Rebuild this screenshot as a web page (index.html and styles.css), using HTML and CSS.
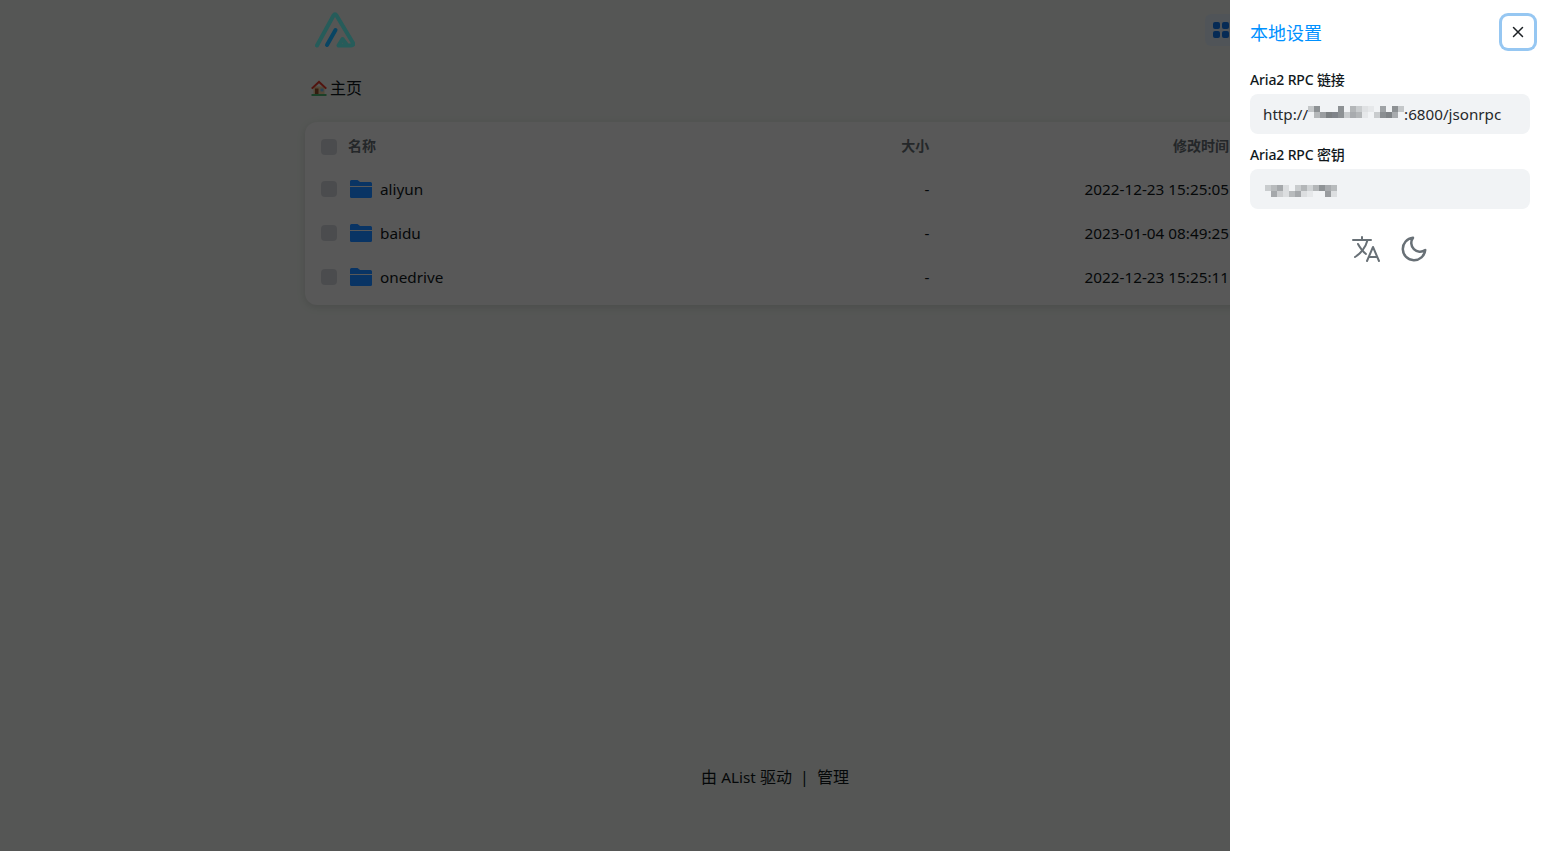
FILE: index.html
```html
<!DOCTYPE html>
<html lang="zh-CN">
<head>
    <meta charset="UTF-8">
    <title>主页 | AList</title>
    <link rel="stylesheet" href="styles.css">
</head>
<body>
    <div class="page">
        <header class="top">
            <svg class="logo raised" viewBox="0 0 40 36" width="40" height="36">
                <path d="M2 33.500 L18.500 3.500 Q20 1 21.500 3.500 L38 31 Q39 33.500 36 33.500 H23.500 L27.500 27 L32 33" fill="none" stroke="#265c5a" stroke-width="4" stroke-linecap="round" stroke-linejoin="round"/>
                <path d="M12 33 L20.500 18" fill="none" stroke="#094563" stroke-width="4" stroke-linecap="round"/>
            </svg>
            <div class="layout-btn">
                <svg class="raised" viewBox="0 0 18 18" width="18" height="18">
                    <rect x="1" y="1" width="7" height="7" rx="2"/>
                    <rect x="10" y="1" width="7" height="7" rx="2"/>
                    <rect x="1" y="10" width="7" height="7" rx="2"/>
                    <rect x="10" y="10" width="7" height="7" rx="2"/>
                </svg>
            </div>
        </header>
        <nav class="crumb">
            <svg class="home" viewBox="0 0 16 16" width="16" height="16">
                <path d="M2.500 6.500h11V14h-11z" fill="#f0cf9f"/>
                <path d="M0 8L8 0.500 16 8l-1.500 1.200L8 3.200 1.500 9.200z" fill="#e8392c"/>
                <path d="M4 8.500h3.500V14H4z" fill="#96502c"/>
                <path d="M9.500 8.500h3V11.500h-3z" fill="#74bdf0"/>
                <path d="M0.500 14h15v2H0.500z" fill="#4fb873"/>
            </svg>
            主页
        </nav>
        <section class="card">
            <div class="row head">
                <div class="name"><span class="check"></span><span class="head-text">名称</span></div>
                <div class="size"><span class="head-text">大小</span></div>
                <div class="time"><span class="head-text">修改时间</span></div>
            </div>
            <div class="row">
                <div class="name"><span class="check"></span><svg class="folder raised" viewBox="0 0 22 18"><path d="M1.500 0h6l2.500 2h10.500a1.500 1.500 0 0 1 1.500 1.500V6H0V1.500A1.500 1.500 0 0 1 1.500 0z"/><path d="M0 7h22v9.500a1.500 1.500 0 0 1-1.500 1.500h-19A1.500 1.500 0 0 1 0 16.500z"/></svg>aliyun</div>
                <div class="size">-</div>
                <div class="time">2022-12-23 15:25:05</div>
            </div>
            <div class="row">
                <div class="name"><span class="check"></span><svg class="folder raised" viewBox="0 0 22 18"><path d="M1.500 0h6l2.500 2h10.500a1.500 1.500 0 0 1 1.500 1.500V6H0V1.500A1.500 1.500 0 0 1 1.500 0z"/><path d="M0 7h22v9.500a1.500 1.500 0 0 1-1.500 1.500h-19A1.500 1.500 0 0 1 0 16.500z"/></svg>baidu</div>
                <div class="size">-</div>
                <div class="time">2023-01-04 08:49:25</div>
            </div>
            <div class="row">
                <div class="name"><span class="check"></span><svg class="folder raised" viewBox="0 0 22 18"><path d="M1.500 0h6l2.500 2h10.500a1.500 1.500 0 0 1 1.500 1.500V6H0V1.500A1.500 1.500 0 0 1 1.500 0z"/><path d="M0 7h22v9.500a1.500 1.500 0 0 1-1.500 1.500h-19A1.500 1.500 0 0 1 0 16.500z"/></svg>onedrive</div>
                <div class="size">-</div>
                <div class="time">2022-12-23 15:25:11</div>
            </div>
        </section>
        <footer class="foot">由 <span class="latin">AList</span> 驱动<span class="sep">|</span>管理</footer>
    </div>

    <div class="overlay"></div>

    <aside class="drawer">
        <div class="drawer-head">
            <h2>本地设置</h2>
            <button class="close">
                <svg viewBox="0 0 12 12" width="12" height="12"><path d="M1.500 1.500l9 9M10.500 1.500l-9 9" stroke="#1c2024" stroke-width="1.500" stroke-linecap="round"/></svg>
            </button>
        </div>
        <label>Aria2 RPC 链接</label>
        <div class="field">http://<svg class="mosaic url" viewBox="0 0 96 12" width="96" height="12" shape-rendering="crispEdges">
            <rect x="0" y="0" width="6" height="6" fill="#c4c7c9"/>
            <rect x="6" y="0" width="6" height="6" fill="#8d9194"/>
            <rect x="12" y="6" width="6" height="6" fill="#9a9da0"/>
            <rect x="6" y="6" width="6" height="6" fill="#b5b8ba"/>
            <rect x="18" y="6" width="6" height="6" fill="#7b7f82"/>
            <rect x="24" y="6" width="6" height="6" fill="#80848a"/>
            <rect x="30" y="0" width="6" height="6" fill="#8d9194"/>
            <rect x="30" y="6" width="6" height="6" fill="#8d9194"/>
            <rect x="36" y="6" width="6" height="6" fill="#c9ccce"/>
            <rect x="42" y="0" width="6" height="6" fill="#b3b6b8"/>
            <rect x="42" y="6" width="6" height="6" fill="#a8abae"/>
            <rect x="48" y="0" width="6" height="6" fill="#c9ccce"/>
            <rect x="48" y="6" width="6" height="6" fill="#b3b6b8"/>
            <rect x="54" y="0" width="6" height="6" fill="#dfe1e3"/>
            <rect x="54" y="6" width="6" height="6" fill="#e6e8ea"/>
            <rect x="60" y="0" width="6" height="6" fill="#e6e8ea"/>
            <rect x="66" y="6" width="6" height="6" fill="#c9ccce"/>
            <rect x="72" y="0" width="6" height="6" fill="#9fa3a6"/>
            <rect x="72" y="6" width="6" height="6" fill="#8a8e91"/>
            <rect x="78" y="6" width="6" height="6" fill="#7f8386"/>
            <rect x="84" y="0" width="6" height="6" fill="#8d9194"/>
            <rect x="84" y="6" width="6" height="6" fill="#a8abae"/>
            <rect x="90" y="0" width="6" height="6" fill="#c4c7c9"/>
        </svg>:6800/jsonrpc</div>
        <label>Aria2 RPC 密钥</label>
        <div class="field">
            <svg class="mosaic key" viewBox="0 0 72 12" width="72" height="12" shape-rendering="crispEdges">
                <rect x="0" y="0" width="6" height="6" fill="#c9ccce"/>
                <rect x="6" y="0" width="6" height="6" fill="#b8bbbd"/>
                <rect x="12" y="0" width="6" height="6" fill="#a5a8ab"/>
                <rect x="18" y="0" width="6" height="6" fill="#dcdee0"/>
                <rect x="30" y="0" width="6" height="6" fill="#c9ccce"/>
                <rect x="36" y="0" width="6" height="6" fill="#b3b6b8"/>
                <rect x="42" y="0" width="6" height="6" fill="#d0d3d5"/>
                <rect x="48" y="0" width="6" height="6" fill="#b3b6b8"/>
                <rect x="54" y="0" width="6" height="6" fill="#8f9396"/>
                <rect x="60" y="0" width="6" height="6" fill="#a8abae"/>
                <rect x="66" y="0" width="6" height="6" fill="#b8bbbd"/>
                <rect x="6" y="6" width="6" height="6" fill="#a5a8ab"/>
                <rect x="12" y="6" width="6" height="6" fill="#ccced0"/>
                <rect x="18" y="6" width="6" height="6" fill="#dcdee0"/>
                <rect x="24" y="6" width="6" height="6" fill="#b8bbbd"/>
                <rect x="30" y="6" width="6" height="6" fill="#a5a8ab"/>
                <rect x="36" y="6" width="6" height="6" fill="#dcdee0"/>
                <rect x="42" y="6" width="6" height="6" fill="#e6e8ea"/>
                <rect x="60" y="6" width="6" height="6" fill="#999c9f"/>
                <rect x="66" y="6" width="6" height="6" fill="#dcdee0"/>
            </svg>
        </div>
        <div class="tools">
            <svg viewBox="0 0 512 512" width="32" height="32" fill="none" stroke="#687076" stroke-width="32" stroke-linecap="round" stroke-linejoin="round">
                <path d="M48 112h288M192 64v48M272 448l96-224 96 224M301.500 384h133M281.300 112S257 206 199 277 80 384 80 384"/>
                <path d="M256 336s-35-27-72-75-56-85-56-85"/>
            </svg>
            <svg class="moon" viewBox="0 0 24 24" width="30" height="30" fill="none" stroke="#687076" stroke-width="2" stroke-linecap="round" stroke-linejoin="round">
                <path d="M21 12.790A9 9 0 1 1 11.210 3 7 7 0 0 0 21 12.790z"/>
            </svg>
        </div>
    </aside>
</body>
</html>
```

FILE: styles.css
```css
html, body {
    margin: 0;
    height: 100%;
}

body {
    font-family: "Noto Sans", "Noto Sans CJK SC", sans-serif;
    font-size: 15.3px;
    color: #11181c;
    background: #f2f7f2;
    overflow: hidden;
}

.page {
    width: 940px;
    height: 851px;
    margin: 0 auto;
    display: flex;
    flex-direction: column;
}

/* logo and icons keep their colour above the dim layer */
.raised {
    position: relative;
    z-index: 2;
}

.top {
    height: 60px;
    padding: 12px 0 0 10px;
    box-sizing: border-box;
    display: flex;
    justify-content: space-between;
    align-items: flex-start;
}

.layout-btn {
    width: 32px;
    height: 32px;
    margin: 2px 8px 0 0;
    border-radius: 6px;
    background: #e6f0fb;
    display: flex;
    align-items: center;
    justify-content: center;
}

.layout-btn rect {
    fill: #052a55;
}

.crumb {
    height: 62px;
    padding: 17px 0 0 6px;
    box-sizing: border-box;
    display: flex;
    align-items: flex-start;
    gap: 3px;
    font-size: 16px;
    line-height: 22px;
}

.home {
    margin-top: 3px;
}

.card {
    border-radius: 12px;
    background: #fbfbfb;
    box-shadow: 0 2px 8px rgba(0, 0, 0, .12);
    padding: 5px 0 6px;
}

.row {
    display: grid;
    grid-template-columns: 50% 17% 33%;
    padding: 0 16px;
    height: 44px;
    align-items: center;
}

.row.head {
    font-size: 14px;
    font-weight: 700;
    color: #687076;
    height: 40px;
}

.head-text {
    display: block;
    line-height: 18px;
    margin-bottom: 2px;
}

.name {
    display: flex;
    align-items: center;
}

.check {
    width: 16px;
    height: 16px;
    border-radius: 4px;
    background: #d7dbdf;
    margin-right: 11px;
}

.folder {
    width: 22px;
    height: 18px;
    margin: 0 8px 0 2px;
    fill: #093464;
}

.size, .time {
    text-align: right;
}

.foot {
    margin-top: auto;
    height: 85px;
    text-align: center;
    font-size: 16px;
    line-height: 22px;
}

.latin {
    font-size: 15.3px;
}

.sep {
    margin: 0 8px;
}

.overlay {
    position: fixed;
    inset: 0;
    z-index: 1;
    background: rgba(0, 0, 0, .65);
}

.drawer {
    position: fixed;
    top: 0;
    right: 0;
    bottom: 0;
    z-index: 3;
    width: 320px;
    box-sizing: border-box;
    padding: 0 20px;
    background: #fff;
}

.drawer-head {
    height: 70px;
    display: flex;
    justify-content: space-between;
    align-items: flex-start;
}

.drawer-head h2 {
    margin: 20px 0 0;
    font-size: 18px;
    font-weight: 400;
    line-height: 26px;
    color: #0091ff;
}

.close {
    width: 32px;
    height: 32px;
    margin: 16px -4px 0 0;
    padding: 0;
    border: 0;
    border-radius: 6px;
    background: #fff;
    box-shadow: 0 0 0 3px #96c7f2;
    display: flex;
    align-items: center;
    justify-content: center;
}

label {
    display: block;
    font-size: 14px;
    font-weight: 500;
    letter-spacing: -.15px;
    line-height: 20px;
    margin-bottom: 4px;
}

.field {
    height: 40px;
    border-radius: 8px;
    background: #f1f3f5;
    padding: 0 13px;
    margin-bottom: 11px;
    display: flex;
    align-items: center;
    font-size: 15.2px;
    color: #26292b;
}

.mosaic {
    flex: none;
}

.mosaic.url {
    margin-bottom: 4px;
}

.mosaic.key {
    margin: 4px 0 0 2px;
}

.tools {
    display: flex;
    justify-content: center;
    align-items: center;
    gap: 17px;
    margin-top: 24px;
    padding-right: 2px;
}
```
